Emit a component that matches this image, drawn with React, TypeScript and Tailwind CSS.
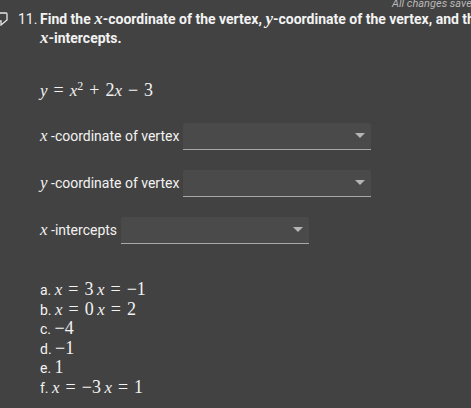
import React from "react";

const V = ({ children }: { children: React.ReactNode }) => (
  <span className="font-['Liberation_Serif','DejaVu_Serif',serif] italic text-[17px] leading-none">{children}</span>
);

const M = ({ children }: { children: React.ReactNode }) => (
  <span className="font-['Liberation_Serif','DejaVu_Serif',serif] text-[18px] leading-none">{children}</span>
);

// relation / binary operator with KaTeX-like spacing
const Op = ({ children }: { children: React.ReactNode }) => (
  <span className="font-['Liberation_Serif','DejaVu_Serif',serif] text-[18px] leading-none px-[6px]">{children}</span>
);

const Select = () => (
  <div className="w-[188px] h-[27px] bg-[#4a4a4a] rounded-t-[3px] border-b border-[#a8a8a8] flex items-center justify-end pr-[6px]">
    <svg width="10" height="6" viewBox="0 0 10 6">
      <path d="M0 0 L10 0 L5 5 Z" fill="#b5b5b5" />
    </svg>
  </div>
);

const options: React.ReactNode[] = [
  <>a. <V>x</V><Op>=</Op><M>3</M> <V>x</V><Op>=</Op><M>−1</M></>,
  <>b. <V>x</V><Op>=</Op><M>0</M> <V>x</V><Op>=</Op><M>2</M></>,
  <>c. <M>−4</M></>,
  <>d. <M>−1</M></>,
  <>e. <M>1</M></>,
  <>f. <V>x</V><Op>=</Op><M>−3</M> <V>x</V><Op>=</Op><M>1</M></>,
];

export default function App() {
  return (
    <div className="w-[471px] h-[408px] overflow-hidden bg-[#424242] text-[#f2f2f2] font-['Roboto',sans-serif] text-[14px]">
      <div className="w-[500px]">
        <div className="h-[10px] leading-[10px] text-[11px] italic text-[#b8b8b8] pl-[392px] -mt-[1px]">
          All changes saved
        </div>
        <div className="flex leading-[19px] mt-[1px]">
          <svg width="8" height="14" viewBox="0 0 8 14" className="mt-[2px] shrink-0">
            <path d="M-4 1 H6 a1 1 0 0 1 1 1 V8 L1 13 V9 H-4" fill="none" stroke="#e6e6e6" strokeWidth="1.3" />
          </svg>
          <span className="ml-[10px] w-[22px] shrink-0">11.</span>
          <div className="w-[452px] font-bold">
            Find the <V>x</V>-coordinate of the vertex, <V>y</V>-coordinate of the vertex, and the <V>x</V>-intercepts.
          </div>
        </div>

        <div className="pl-[40px] mt-[33px] leading-[20px]">
          <V>y</V><Op>=</Op><V>x</V>
          <sup className="font-['Liberation_Serif',serif] text-[12px]">2</sup><Op>+</Op><M>2</M><V>x</V><Op>−</Op><M>3</M>
        </div>

        <div className="pl-[40px] mt-[22px] flex flex-col gap-[20px]">
          <div className="flex items-center gap-[4px]">
            <span><V>x</V> -coordinate of vertex</span>
            <Select />
          </div>
          <div className="flex items-center gap-[4px]">
            <span><V>y</V> -coordinate of vertex</span>
            <Select />
          </div>
          <div className="flex items-center gap-[4px]">
            <span><V>x</V> -intercepts</span>
            <Select />
          </div>
        </div>

        <div className="pl-[40px] mt-[36px] flex flex-col">
          {options.map((o, i) => (
            <div key={i} className="h-[19.6px] leading-[19.6px]">{o}</div>
          ))}
        </div>
      </div>
    </div>
  );
}
